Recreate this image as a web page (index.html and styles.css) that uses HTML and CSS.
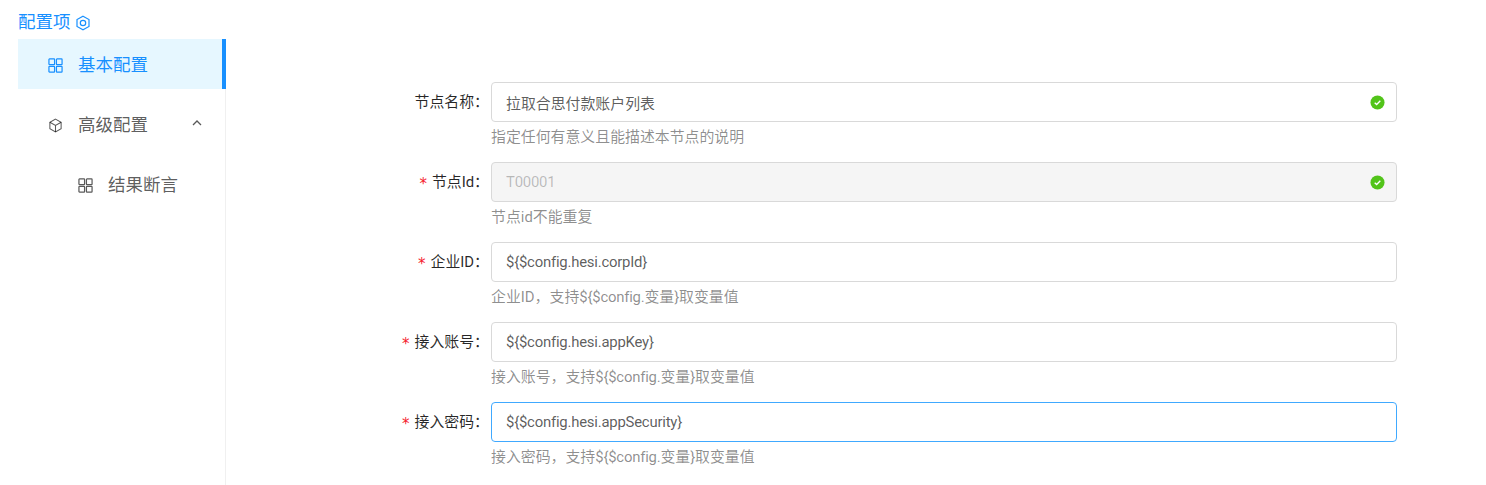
FILE: index.html
```html
<!DOCTYPE html>
<html lang="zh-CN">
<head>
    <meta charset="UTF-8">
    <title>配置项</title>
    <link rel="stylesheet" href="styles.css">
</head>
<body>
    <div class="page-title">
        <span>配置项</span>
        <svg class="title-icon" viewBox="0 0 16 16" fill="none" stroke="currentColor" stroke-width="1.2">
            <path d="M8 1.2l6 3.4v6.800l-6 3.400-6-3.400V4.600z"/>
            <circle cx="8" cy="8" r="2.700"/>
        </svg>
    </div>
    <div class="layout">
        <div class="side-menu">
            <div class="menu-item active">
                <svg class="menu-icon" viewBox="0 0 16 16" fill="none" stroke="currentColor" stroke-width="1.300">
                    <rect x="1" y="1" width="6" height="6" rx="0.600"/><rect x="9" y="1" width="6" height="6" rx="0.600"/>
                    <rect x="1" y="9" width="6" height="6" rx="0.600"/><rect x="9" y="9" width="6" height="6" rx="0.600"/>
                </svg>
                <span>基本配置</span>
            </div>
            <div class="menu-item">
                <svg class="menu-icon" viewBox="0 0 16 16" fill="none" stroke="currentColor" stroke-width="1.100">
                    <path d="M8 1.200l6 3.400v6.800l-6 3.400-6-3.400V4.600z"/>
                    <path d="M2 4.600l6 3.400 6-3.400M8 8v6.800"/>
                </svg>
                <span>高级配置</span>
                <svg class="arrow" viewBox="0 0 10 6" fill="none" stroke="currentColor" stroke-width="1.300"><path d="M1 5l4-4 4 4"/></svg>
            </div>
            <div class="menu-item sub-item">
                <svg class="menu-icon" viewBox="0 0 16 16" fill="none" stroke="currentColor" stroke-width="1.300">
                    <rect x="1" y="1" width="6" height="6" rx="0.600"/><rect x="9" y="1" width="6" height="6" rx="0.600"/>
                    <rect x="1" y="9" width="6" height="6" rx="0.600"/><rect x="9" y="9" width="6" height="6" rx="0.600"/>
                </svg>
                <span>结果断言</span>
            </div>
        </div>

        <div class="form">
            <div class="form-row">
                <label class="form-label">节点名称：</label>
                <div class="form-control">
                    <div class="input">
                        <span>拉取合思付款账户列表</span>
                        <svg class="check" viewBox="0 0 16 16"><circle cx="8" cy="8" r="7.500" fill="#52c41a"/><path d="M5 8.200l2.100 2 3.900-4" fill="none" stroke="#fff" stroke-width="1.400"/></svg>
                    </div>
                    <div class="help">指定任何有意义且能描述本节点的说明</div>
                </div>
            </div>
            <div class="form-row">
                <label class="form-label"><span class="required">*</span>节点Id：</label>
                <div class="form-control">
                    <div class="input disabled">
                        <span class="latin">T00001</span>
                        <svg class="check" viewBox="0 0 16 16"><circle cx="8" cy="8" r="7.500" fill="#52c41a"/><path d="M5 8.200l2.100 2 3.900-4" fill="none" stroke="#fff" stroke-width="1.400"/></svg>
                    </div>
                    <div class="help">节点id不能重复</div>
                </div>
            </div>
            <div class="form-row">
                <label class="form-label"><span class="required">*</span>企业ID：</label>
                <div class="form-control">
                    <div class="input"><span class="latin">${$config.hesi.corpId}</span></div>
                    <div class="help">企业ID，支持<span class="latin">${$config.</span>变量<span class="latin">}</span>取变量值</div>
                </div>
            </div>
            <div class="form-row">
                <label class="form-label"><span class="required">*</span>接入账号：</label>
                <div class="form-control">
                    <div class="input"><span class="latin">${$config.hesi.appKey}</span></div>
                    <div class="help">接入账号，支持<span class="latin">${$config.</span>变量<span class="latin">}</span>取变量值</div>
                </div>
            </div>
            <div class="form-row">
                <label class="form-label"><span class="required">*</span>接入密码：</label>
                <div class="form-control">
                    <div class="input focused"><span class="latin">${$config.hesi.appSecurity}</span></div>
                    <div class="help">接入密码，支持<span class="latin">${$config.</span>变量<span class="latin">}</span>取变量值</div>
                </div>
            </div>
        </div>
    </div>
</body>
</html>
```

FILE: styles.css
```css
html, body {
    height: 100%;
    overflow: hidden;
}

body {
    margin: 0;
    background-color: #fff;
    color: rgba(0, 0, 0, 0.85);
    font-family: Roboto, "Noto Sans CJK SC", sans-serif;
    font-size: 14.9px;
}

.latin {
    letter-spacing: -0.22px;
}

.page-title {
    display: flex;
    align-items: center;
    gap: 4px;
    height: 22px;
    margin: 11px 0 0 18px;
    color: #1890ff;
    font-size: 17.5px;
    line-height: 23px;
}

.title-icon {
    width: 16px;
    height: 18px;
    margin-top: 1px;
}

.layout {
    display: flex;
    margin: 6px 0 0 18px;
}

.side-menu {
    width: 207px;
    height: 452px;
    flex-shrink: 0;
    border-right: 1px solid #f0f0f0;
}

.menu-item {
    position: relative;
    display: flex;
    align-items: center;
    height: 50px;
    margin-bottom: 10px;
    padding-left: 30px;
    color: rgba(0, 0, 0, 0.65);
    font-size: 17.5px;
    line-height: 52px;
}

.menu-item span {
    height: 50px;
}

.menu-item.active {
    width: 208px;
    box-sizing: border-box;
    background-color: #e6f7ff;
    color: #1890ff;
}

.menu-item.active::after {
    content: "";
    position: absolute;
    top: 0;
    right: 0;
    bottom: 0;
    width: 4px;
    background-color: #1890ff;
}

.sub-item {
    padding-left: 60px;
}

.menu-icon {
    width: 15px;
    height: 15px;
    margin: 2px 15px 0 0;
    flex-shrink: 0;
}

.arrow {
    width: 10px;
    height: 6px;
    margin: 0 0 3px 44px;
}

.form {
    display: flex;
    flex-direction: column;
    padding-top: 43px;
}

.form-row {
    display: flex;
    height: 80px;
}

.form-label {
    display: flex;
    align-items: center;
    justify-content: flex-end;
    width: 263px;
    height: 37px;
    margin-right: 2px;
    white-space: nowrap;
}

.required {
    margin: 6px 5px 0 0;
    color: #f5222d;
    font-family: "DejaVu Sans", sans-serif;
    font-size: 15px;
}

.form-control {
    width: 906px;
}

.input {
    display: flex;
    align-items: center;
    justify-content: space-between;
    box-sizing: border-box;
    height: 40px;
    padding: 0 11px 0 14px;
    border: 1px solid #d9d9d9;
    border-radius: 4px;
    color: rgba(0, 0, 0, 0.65);
}

.input.disabled {
    background-color: #f5f5f5;
    color: rgba(0, 0, 0, 0.25);
}

.input.focused {
    border-color: #40a9ff;
}

.check {
    width: 15px;
    height: 15px;
}

.help {
    height: 30px;
    color: rgba(0, 0, 0, 0.45);
    line-height: 31px;
}
```
